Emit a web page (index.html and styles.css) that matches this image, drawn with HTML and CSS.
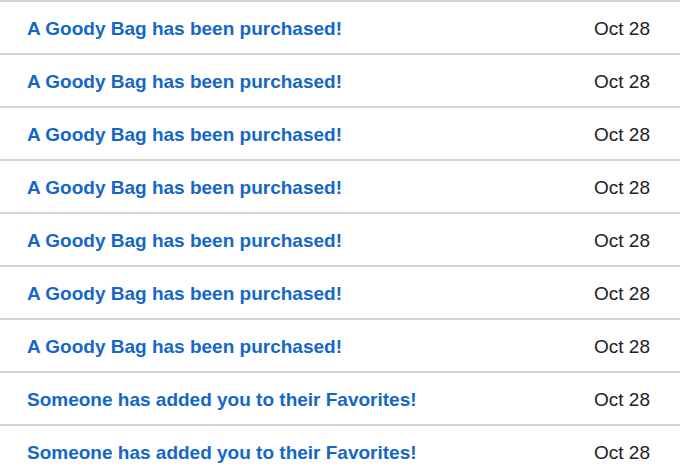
FILE: index.html
```html
<!DOCTYPE html>
<html lang="en">
<head>
    <meta charset="UTF-8">
    <title>Notifications</title>
    <link rel="stylesheet" href="styles.css">
</head>
<body>
    <ul class="notice-list">
        <li class="notice"><a class="notice-title" href="#">A Goody Bag has been purchased!</a><span class="notice-date">Oct 28</span></li>
        <li class="notice"><a class="notice-title" href="#">A Goody Bag has been purchased!</a><span class="notice-date">Oct 28</span></li>
        <li class="notice"><a class="notice-title" href="#">A Goody Bag has been purchased!</a><span class="notice-date">Oct 28</span></li>
        <li class="notice"><a class="notice-title" href="#">A Goody Bag has been purchased!</a><span class="notice-date">Oct 28</span></li>
        <li class="notice"><a class="notice-title" href="#">A Goody Bag has been purchased!</a><span class="notice-date">Oct 28</span></li>
        <li class="notice"><a class="notice-title" href="#">A Goody Bag has been purchased!</a><span class="notice-date">Oct 28</span></li>
        <li class="notice"><a class="notice-title" href="#">A Goody Bag has been purchased!</a><span class="notice-date">Oct 28</span></li>
        <li class="notice"><a class="notice-title" href="#">Someone has added you to their Favorites!</a><span class="notice-date">Oct 28</span></li>
        <li class="notice"><a class="notice-title" href="#">Someone has added you to their Favorites!</a><span class="notice-date">Oct 28</span></li>
    </ul>
</body>
</html>
```

FILE: styles.css
```css
* {
    margin: 0;
    padding: 0;
    box-sizing: border-box;
}

body {
    font-family: "Liberation Sans", Arial, sans-serif;
    background: white;
    overflow: hidden;
}

.notice-list {
    list-style: none;
}

.notice {
    height: 53px;
    border-top: 2px solid #d4d4d4;
    display: flex;
    align-items: center;
    justify-content: space-between;
    padding: 3px 30px 0 27px;
}

.notice-title {
    color: #1467c8;
    font-size: 19px;
    font-weight: bold;
    text-decoration: none;
}

.notice-date {
    color: #222;
    font-size: 19px;
}
```
